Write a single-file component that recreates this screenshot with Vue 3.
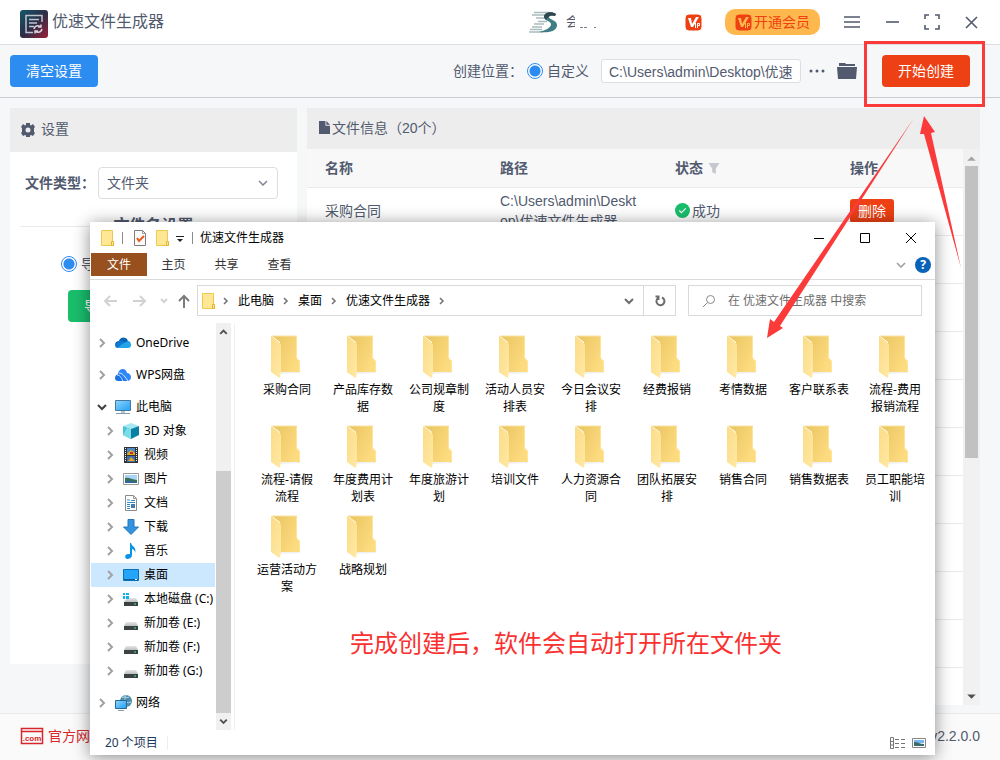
<script setup>
import { ref } from 'vue'

const location = ref('custom')
const source = ref('import')
const path = ref('C:\\Users\\admin\\Desktop\\优速')
const search = ref('')

const drives = [
  { name: '3D 对象', icon: 'cube' },
  { name: '视频', icon: 'video' },
  { name: '图片', icon: 'picture' },
  { name: '文档', icon: 'doc' },
  { name: '下载', icon: 'download' },
  { name: '音乐', icon: 'music' },
  { name: '桌面', icon: 'desktop', active: true },
  { name: '本地磁盘 (C:)', icon: 'system-disk' },
  { name: '新加卷 (E:)', icon: 'disk' },
  { name: '新加卷 (F:)', icon: 'disk' },
  { name: '新加卷 (G:)', icon: 'disk' },
]

const groups = [
  { items: [{ name: 'OneDrive', icon: 'onedrive' }] },
  { items: [{ name: 'WPS网盘', icon: 'wps' }] },
  {
    items: [
      { name: '此电脑', icon: 'pc', open: true },
      ...drives.map((d) => ({ ...d, child: true })),
    ],
  },
  { items: [{ name: '网络', icon: 'network' }] },
]

const folders = [
  '采购合同', '产品库存数据', '公司规章制度', '活动人员安排表', '今日会议安排',
  '经费报销', '考情数据', '客户联系表', '流程-费用报销流程',
  '流程-请假流程', '年度费用计划表', '年度旅游计划', '培训文件', '人力资源合同',
  '团队拓展安排', '销售合同', '销售数据表', '员工职能培训',
  '运营活动方案', '战略规划',
]

const crumbs = ['此电脑', '桌面', '优速文件生成器']
</script>

<template>
  <div class="app">
    <svg class="sprite" aria-hidden="true">
      <defs>
        <linearGradient id="gBack" x1="0" y1="0" x2="1" y2="0.6">
          <stop offset="0" stop-color="#e9c45f" /><stop offset="1" stop-color="#fddc80" />
        </linearGradient>
        <linearGradient id="gFlap" x1="0" y1="0" x2="1" y2="1">
          <stop offset="0" stop-color="#fbdc85" /><stop offset="1" stop-color="#ffe9a6" />
        </linearGradient>
        <linearGradient id="gLogo" x1="0" y1="0" x2="1" y2="1">
          <stop offset="0" stop-color="#14586a" /><stop offset="0.5" stop-color="#2c2d48" /><stop offset="1" stop-color="#9c2038" />
        </linearGradient>
        <linearGradient id="gScreen" x1="0" y1="0" x2="1" y2="1">
          <stop offset="0" stop-color="#8fd4ff" /><stop offset="1" stop-color="#22a0f5" />
        </linearGradient>
        <linearGradient id="gDisk" x1="0" y1="0" x2="0" y2="1">
          <stop offset="0" stop-color="#e4e7e9" /><stop offset="1" stop-color="#b9bec2" />
        </linearGradient>
      </defs>
      <symbol id="i-folder-large" viewBox="0 0 32 44">
        <path d="M9 37h19l2 1-21 1z" fill="#f1f1f1" />
        <path d="M1 1h25v22l3 3v11H9V7z" fill="url(#gBack)" />
        <path d="M25.500 2v21.500l3 3V36" fill="none" stroke="#ffe59a" />
        <path d="M0 1l9 7 1 2v26l-1 7-2-1-7-5z" fill="url(#gFlap)" />
        <path d="M1 1h25" stroke="#f8e3a4" />
      </symbol>
      <symbol id="i-folder" viewBox="0 0 16 18">
        <path d="M1.500 1.500h11v12h1v3h-12z" fill="#ffe795" stroke="#eec84f" />
        <path d="M11.500 12.500h2v4h-2z" fill="#ffe795" stroke="#e3b52f" />
      </symbol>
      <symbol id="i-chevron" viewBox="0 0 8 12"><path d="M2 2l4 4-4 4" fill="none" stroke="#a2a2a2" stroke-width="2" /></symbol>
      <symbol id="i-onedrive" viewBox="0 0 18 18">
        <path d="M1 11C1 8 3 7 5 7 6 3 12 2 14 7l1 2z" fill="#0a64b4" />
        <path d="M5 7c3-1 5 1 7 3l-8 4H4C2 14 1 13 1 11z" fill="#1078d2" />
        <path d="M8 10l6-3c2 0 3 2 3 4s-1 3-3 3H4z" fill="#1fa6ea" />
      </symbol>
      <symbol id="i-wps" viewBox="0 0 18 18">
        <path d="M4 9C4 2 12 1 13 7c2 0 4 2 4 4 0 2-1 4-4 4H8z" fill="#2f86f7" />
        <path d="M1 12c0-3 3-5 6-3l5 6H4c-2 0-3-1-3-3z" fill="#1a72e8" />
        <path d="M5 7c3 0 5 2 9 8M3 9c3 0 4 2 6 6" stroke="#d4e8ff" fill="none" />
      </symbol>
      <symbol id="i-pc" viewBox="0 0 18 18">
        <path d="M1.500 2.500h15v10h-15z" fill="url(#gScreen)" stroke="#42799d" />
        <path d="M7 13h4v2H7z" fill="#b7c7d1" /><path d="M2 15.500h14" stroke="#7f9bac" />
      </symbol>
      <symbol id="i-cube" viewBox="0 0 18 18">
        <path d="M1 4l8-3 8 3-8 3z" fill="#a5e8f2" /><path d="M1 4l8 3v10l-8-4z" fill="#46c3d8" /><path d="M17 4L9 7v10l8-4z" fill="#087fa3" />
        <path d="M1 13l4-7 4 1v10z" fill="#7edbe8" />
      </symbol>
      <symbol id="i-video" viewBox="0 0 18 18">
        <path d="M2 1h14v16H2z" fill="#333" /><path d="M5 2h8v7H5z" fill="#4f89c6" /><path d="M5 10h8v6H5z" fill="#3f6eb2" />
        <path d="M5 8l4-4 4 3v2H5zM6 15l3-4 4 4z" fill="#e1a821" /><path d="M8 6h3v2H8z" fill="#bd3527" />
        <path d="M3.500 2v14M14.500 2v14" stroke="#eee" stroke-dasharray="1 1" />
      </symbol>
      <symbol id="i-picture" viewBox="0 0 18 18">
        <path d="M1.500 3.500h15v11h-15z" fill="#fff" stroke="#999" /><path d="M3 5h12v8H3z" fill="#a9d4f5" />
        <path d="M3 8c4-1 7 2 12 2v3H3z" fill="#37705c" /><path d="M3 11c4 0 8 0 12 2H3z" fill="#2b65a5" />
      </symbol>
      <symbol id="i-doc" viewBox="0 0 18 18">
        <path d="M3.500 1.500h8l3 3v12h-11z" fill="#fff" stroke="#8b8b8b" /><path d="M11.500 1.500v3h3" fill="none" stroke="#999" />
        <path d="M5 6h3M9 6.500h4M5 8.500h8M5 10.500h3M5 12.500h3M5 14.500h3" stroke="#328bc5" /><path d="M9 10h4v4H9z" fill="#417bb0" />
      </symbol>
      <symbol id="i-download" viewBox="0 0 18 18"><path d="M6 1.500h6V9h4.500L9 16.500 1.500 9H6z" fill="#3393df" stroke="#2476bd" /></symbol>
      <symbol id="i-music" viewBox="0 0 18 18">
        <path d="M9 1c1 4 6 4 4 10 0-3-2-4-3-4v6c0 3-3 4-5 4-3-1-2-5 1-5h2V1z" fill="#0b93e6" />
      </symbol>
      <symbol id="i-desktop" viewBox="0 0 18 18">
        <path d="M1.500 3.500h15v11h-15z" fill="#24a5fa" stroke="#0a70b8" /><path d="M2 13.500h14" stroke="#0c5c96" /><path d="M13 13.500h2" stroke="#fff" />
      </symbol>
      <symbol id="i-disk" viewBox="0 0 18 18">
        <path d="M4 8h10l2 4H2z" fill="url(#gDisk)" /><path d="M2 12h14v4H2z" fill="#3c4144" /><path d="M12 14h2" stroke="#3df06c" stroke-width="1" />
      </symbol>
      <symbol id="i-system-disk" viewBox="0 0 18 18">
        <path d="M5 8h9l2 4H2z" fill="url(#gDisk)" /><path d="M2 12h14v4H2z" fill="#3c4144" /><path d="M12 14h2" stroke="#3df06c" stroke-width="1" />
        <path d="M1 3h2v2H1zM4 3h3v2H4zM1 6h2v3H1zM4 6h3v3H4z" fill="#11b2ef" />
      </symbol>
      <symbol id="i-network" viewBox="0 0 18 18">
        <circle cx="12" cy="7" r="6" fill="#4b8bab" /><path d="M8 4c3-3 4 1 7-1M9 8c3-1 4 2 8 0M12 1c-2 4-1 8 1 11" stroke="#bbdcea" fill="none" />
        <path d="M1.500 6.500h11v8h-11z" fill="url(#gScreen)" stroke="#29688f" /><path d="M4 16.500h6" stroke="#8aa2b0" />
      </symbol>
      <symbol id="i-vip" viewBox="0 0 17 17">
        <rect width="17" height="17" rx="4" fill="#ee4012" />
        <path class="vip-v" d="M3 4h3l1 6 4-7h3L8 13H6z" />
        <path class="vip-p" d="M10.500 9v5M12.500 14V9.500h2v2h-2" />
      </symbol>
    </svg>

    <header class="titlebar">
      <svg class="logo" viewBox="0 0 28 28">
        <rect width="28" height="28" rx="3" fill="url(#gLogo)" />
        <path d="M22 12V5.500H6v17h7M9 9.500h10M9 13h8M9 16.500h5" fill="none" stroke="#bcc4cf" stroke-width="1.500" />
        <path d="M14 19c1-4 5-4 7-2M21 14.500V17h-3M22 19c-1 4-5 4-7 2M15 23.500V21h3" fill="none" stroke="#d7d2da" stroke-width="1.500" />
      </svg>
      <h1 class="app-name">优速文件生成器</h1>
      <div class="account">
        <svg class="avatar" viewBox="0 0 30 24">
          <path d="M6 2.500h15M4 5h13M8 8h10M10 11.500h9M6 14h10M4 17h10M2 19.500h12M1 22h14" stroke="#a9bcbe" stroke-width="1.500" />
          <path d="M28 4C24 1 16 2 16 7c0 4 8 4 7 8-1 3-5 5-12 7 8 1 17 0 18-6 1-6-8-6-8-9 0-2 4-2 6-1z" fill="#417e83" />
          <path d="M28 4C24 1 16 2 16 7l2 3c2-2 2-5 9-4z" fill="#2f474d" />
        </svg>
        <span class="user">会</span>
        <svg class="smudge" viewBox="0 0 20 4"><path d="M1 2.500h3M5 2.500h3M15 2.500h2" stroke="#777f91" /></svg>
      </div>
      <svg class="vip"><use href="#i-vip" /></svg>
      <button class="vip-btn"><svg class="vip"><use href="#i-vip" /></svg>开通会员</button>
      <button class="win-btn menu" aria-label="菜单"><svg viewBox="0 0 18 18"><path d="M1 4h16M1 9h16M1 14h16" /></svg></button>
      <button class="win-btn" aria-label="最小化"><svg viewBox="0 0 18 18"><path d="M3 9h13" /></svg></button>
      <button class="win-btn" aria-label="最大化"><svg viewBox="0 0 18 18"><path d="M2 6V2h4M12 2h4v4M16 12v4h-4M6 16H2v-4" /></svg></button>
      <button class="win-btn" aria-label="关闭"><svg viewBox="0 0 18 18"><path d="M3 4l11 11M14 4L3 15" /></svg></button>
    </header>

    <div class="toolbar">
      <button class="btn blue">清空设置</button>
      <span class="loc-label">创建位置：</span>
      <label class="radio"><input v-model="location" type="radio" name="location" value="custom">自定义</label>
      <input v-model="path" class="path" type="text" aria-label="创建位置">
      <button class="plain dots" aria-label="更多"><svg viewBox="0 0 16 6"><circle cx="2" cy="3" r="1.500" /><circle cx="8" cy="3" r="1.500" /><circle cx="14" cy="3" r="1.500" /></svg></button>
      <button class="plain open" aria-label="打开文件夹"><svg viewBox="0 0 20 18"><path d="M2 4V1h6l1 1h9v2z" /><path d="M0 5h20l-1 12H1z" /></svg></button>
      <div class="create">
        <button class="btn red">开始创建</button>
        <span class="highlight"></span>
      </div>
    </div>

    <main class="main">
      <section class="settings">
        <h2 class="panel-head">
          <svg class="gear" viewBox="0 0 16 16"><path fill-rule="evenodd" d="M6 1h4v2l1 .5L13 2l2 3-1 1v4l1 1-2 3-2-1-1 .5V15H6v-1.500L5 13l-2 1-2-3 1-1V6L1 5l2-3 2 1.500L6 3zM8 5.500a2.500 2.500 0 1 0 0 5 2.500 2.500 0 0 0 0-5z" /></svg>
          设置
        </h2>
        <div class="field">
          <label for="type">文件类型：</label>
          <div class="select">
            <select id="type"><option>文件夹</option></select>
            <svg viewBox="0 0 10 6"><path d="M1 1l4 4 4-4" /></svg>
          </div>
        </div>
        <div class="divider"><span>文件名设置</span></div>
        <label class="radio mode"><input v-model="source" type="radio" name="source" value="import">导入</label>
        <button class="btn green">导入</button>
      </section>

      <section class="files">
        <h2 class="panel-head slim">
          <svg class="page" viewBox="0 0 12 14"><path d="M0 0h7v5h5v9H0z" /><path d="M8 0l4 4H8z" /></svg>文件信息（20个）
        </h2>
        <div class="table-area">
          <div class="table-wrap">
            <table>
              <thead>
                <tr>
                  <th>名称</th><th>路径</th>
                  <th>状态<svg class="filter" viewBox="0 0 12 12"><path d="M0 0h12L8 6v6l-4-2V6z" /></svg></th>
                  <th>操作</th>
                </tr>
              </thead>
              <tbody>
                <tr>
                  <td>采购合同</td>
                  <td class="wrap">C:\Users\admin\Desktop\优速文件生成器</td>
                  <td><span class="ok"><svg viewBox="0 0 14 14"><circle cx="7" cy="7" r="7" /><path d="M4 7l2 2 4-4" /></svg>成功</span></td>
                  <td><button class="del">删除</button></td>
                </tr>
                <tr v-for="n in 11" :key="n"><td></td><td></td><td></td><td></td></tr>
              </tbody>
            </table>
          </div>
          <div class="scroll">
            <svg viewBox="0 0 16 16"><path d="M4 11l4-4 4 4z" fill="#a3a3a3" /></svg>
            <div class="track"><div class="thumb"></div></div>
            <svg viewBox="0 0 16 16"><path d="M4 6l4 4 4-4z" fill="#505050" /></svg>
          </div>
        </div>
      </section>
    </main>

    <footer class="footer">
      <a class="site" href="#">
        <svg viewBox="0 0 24 18"><path d="M1.500 1.500h21v15h-21zM1.500 4.500h21" fill="none" stroke="#d8262c" stroke-width="1.500" /><text x="12" y="14" text-anchor="middle">.com</text></svg>官方网站
      </a>
      <span>v2.2.0.0</span>
    </footer>

    <section class="explorer" aria-label="文件资源管理器">
      <div class="ex-title">
        <svg class="f"><use href="#i-folder" /></svg>
        <i class="bar"></i>
        <svg class="f check" viewBox="0 0 16 18"><path d="M2.500 1.500h8l3 3v12h-11z" fill="#fafafa" stroke="#7d7d7d" /><path d="M10.500 1.500v3h3" fill="none" stroke="#999" /><path d="M5 9l2 3 5-5" fill="none" stroke="#e9591c" stroke-width="2" /></svg>
        <svg class="f"><use href="#i-folder" /></svg>
        <svg class="drop" viewBox="0 0 8 8"><path d="M0 1.500h8" stroke="#222" /><path d="M1 4h6L4 7z" fill="#222" /></svg>
        <i class="bar"></i>
        <span class="ex-name">优速文件生成器</span>
        <button class="ex-btn" aria-label="最小化"><svg viewBox="0 0 12 12"><path d="M1 6.500h10" /></svg></button>
        <button class="ex-btn" aria-label="最大化"><svg viewBox="0 0 12 12"><path d="M1.500 1.500h9v9h-9z" /></svg></button>
        <button class="ex-btn" aria-label="关闭"><svg viewBox="0 0 12 12"><path d="M1 1l10 10M11 1L1 11" /></svg></button>
      </div>
      <div class="tabs">
        <button class="active">文件</button><button>主页</button><button>共享</button><button>查看</button>
        <svg class="fold" viewBox="0 0 10 6"><path d="M1 1l4 4 4-4" /></svg>
        <button class="help" aria-label="帮助">?</button>
      </div>
      <div class="address">
        <svg class="nav-i" viewBox="0 0 14 12"><path d="M7 1L2 6l5 5M2 6h12" stroke="#d2d2d2" /></svg>
        <svg class="nav-i" viewBox="0 0 14 12"><path d="M7 1l5 5-5 5M12 6H0" stroke="#d2d2d2" /></svg>
        <svg class="nav-s" viewBox="0 0 8 6"><path d="M1 1l3 3 3-3" stroke="#d2d2d2" /></svg>
        <svg class="nav-i up" viewBox="0 0 14 14"><path d="M2 7l5-5 5 5M7 2v12" stroke="#7c7c7c" /></svg>
        <div class="crumbs">
          <svg class="f"><use href="#i-folder" /></svg>
          <svg class="sep" viewBox="0 0 6 8"><path d="M1 1l3 3-3 3" /></svg>
          <template v-for="c in crumbs" :key="c">
            <a href="#">{{ c }}</a>
            <svg class="sep" viewBox="0 0 6 8"><path d="M1 1l3 3-3 3" /></svg>
          </template>
          <svg class="pick" viewBox="0 0 10 8"><path d="M1 2l4 4 4-4" /></svg>
          <button class="refresh" aria-label="刷新"><svg viewBox="0 0 12 12"><path d="M8 2.500a4 4 0 1 1-4 .5M1.500 1.500h3V5" /></svg></button>
        </div>
        <div class="search">
          <svg viewBox="0 0 14 14"><circle cx="8.500" cy="5.500" r="4" /><path d="M5.500 8.500L1 13" /></svg>
          <input v-model="search" type="search" aria-label="搜索" placeholder="在 优速文件生成器 中搜索">
        </div>
      </div>
      <div class="ex-body">
        <nav class="tree">
          <ul v-for="(g, i) in groups" :key="i">
            <li v-for="item in g.items" :key="item.name">
              <a href="#" :class="{ child: item.child, active: item.active }">
                <svg v-if="item.open" class="arrow wide" viewBox="0 0 10 12"><path d="M1 4l4 4 4-4" fill="none" stroke="#404040" stroke-width="2" /></svg>
                <svg v-else class="arrow"><use href="#i-chevron" /></svg>
                <svg class="ico"><use :href="'#i-' + item.icon" /></svg>
                <span>{{ item.name }}</span>
              </a>
            </li>
          </ul>
        </nav>
        <div class="ex-scroll">
          <svg viewBox="0 0 16 16"><path d="M4.500 10.500L8 7l3.500 3.500" /></svg>
          <div class="track"><div class="thumb"></div></div>
          <svg viewBox="0 0 16 16"><path d="M4.500 6L8 9.500 11.500 6" /></svg>
        </div>
        <div class="content">
          <ul class="grid">
            <li v-for="f in folders" :key="f">
              <svg><use href="#i-folder-large" /></svg>
              <span>{{ f }}</span>
            </li>
          </ul>
          <p class="note">完成创建后，软件会自动打开所在文件夹</p>
        </div>
      </div>
      <div class="status">
        <span>20 个项目</span>
        <svg class="details" viewBox="0 0 18 14"><path d="M1.500 1.500h3v11h-3zM1.500 5.500h3M1.500 9h3M6 3.500h4M12 3.500h4M6 7.500h4M12 7.500h4M6 11.500h4M12 11.500h4" /></svg>
        <svg class="large" viewBox="0 0 14 12"><path d="M.5 1.500h13v9H.5z" fill="#fff" stroke="#858585" /><path d="M2 3h10v3H2z" fill="#74b5f6" /><path d="M2 5c4 0 6 2 10 2v2H2z" fill="#3c6c69" /></svg>
      </div>
    </section>

    <svg class="arrows" viewBox="0 0 240 240" aria-hidden="true">
      <path d="M154 12L14 216l-4-3-3 19 16-10-3-2z" />
      <path d="M164 10l-4 18h4l37 134-30-135 4-1z" />
    </svg>
  </div>
</template>

<style>
body { background: #f5f7f9; }
</style>

<style scoped>
* { box-sizing: border-box; }
.app {
  position: relative;
  display: flex;
  flex-direction: column;
  height: 100vh;
  overflow: hidden;
  color: #515a6e;
  background: #f5f7f9;
  font: 14px/20px "Liberation Sans", "Noto Sans CJK SC", sans-serif;
}
.sprite { position: absolute; width: 0; height: 0; }
button, input, select { font: inherit; color: inherit; }
button { padding: 0; border: 0; background: none; white-space: nowrap; }
ul { margin: 0; padding: 0; list-style: none; }
a { color: inherit; text-decoration: none; }
svg { flex: none; }

.titlebar {
  display: flex;
  align-items: center;
  height: 45px;
  flex: none;
  padding: 0 19px 0 20px;
  background: #fff;
  border-bottom: 1px solid #dcdee2;
}
.logo { width: 28px; height: 28px; margin: 4px 4px 0 0; }
.app-name { margin: 0 auto 0 0; font-size: 16px; font-weight: 400; }
.account { display: flex; align-items: center; width: 157px; }
.avatar { width: 30px; height: 24px; }
.user { position: relative; margin-left: 8px; font-size: 13px; }
.user::after { content: ""; position: absolute; inset: 0 0 0 9px; background: #fff; }
.smudge { width: 20px; height: 4px; margin-top: 10px; }
.vip { width: 17px; height: 17px; fill: #fff; stroke: #fff; }
.vip-v { stroke: none; }
.vip-p { fill: none; }
.vip-btn {
  display: flex;
  align-items: center;
  gap: 2px;
  height: 26px;
  margin: 0 16px 0 23px;
  padding: 0 10px;
  border-radius: 10px;
  color: #ee4012;
  background: #ffb84d;
}
.vip-btn .vip { fill: #ffb84d; stroke: #ffb84d; }
.win-btn { display: flex; margin-left: 22px; }
.win-btn.menu { margin-left: 7px; }
.win-btn svg { width: 18px; height: 18px; fill: none; stroke: #515a6e; stroke-width: 1.6; }

.toolbar {
  display: flex;
  align-items: center;
  height: 53px;
  flex: none;
  padding: 0 30px 0 10px;
  border-bottom: 1px solid #c9ccd2;
}
.btn { height: 32px; padding: 0 16px; border-radius: 4px; color: #fff; }
.blue { background: #2d8cf0; }
.red { background: #ed4014; }
.green { background: #19be6b; }
.loc-label { margin-left: auto; }
.radio { display: flex; align-items: center; gap: 4px; }
.radio input {
  appearance: none;
  width: 16px;
  height: 16px;
  margin: 0 0 0 4px;
  border: 1px solid #2d8cf0;
  border-radius: 50%;
  background: radial-gradient(circle, #2d8cf0 5px, #fff 6px);
}
.path {
  width: 200px;
  height: 24px;
  margin: 0 8px 0 12px;
  padding: 0 7px;
  border: 1px solid #dcdee2;
  border-radius: 3px;
  background: #fff;
}
.plain { display: flex; }
.plain svg { fill: #515a6e; }
.dots svg { width: 16px; height: 6px; }
.open { margin-left: 12px; }
.open svg { width: 20px; height: 18px; }
.create { position: relative; margin-left: 25px; }
.highlight { position: absolute; inset: -14px -15px -20px -18px; border: 3px solid #fb3a3a; }

.main { display: flex; flex: 1; gap: 10px; min-height: 0; padding: 10px 20px 8px 10px; }
.settings { flex: 0 1 287px; margin-bottom: 41px; background: #fff; }
.files { display: flex; flex-direction: column; flex: 1; min-width: 0; background: #fff; }
.panel-head {
  display: flex;
  align-items: center;
  gap: 5px;
  height: 44px;
  margin: 0;
  padding: 0 10px 2px;
  font-size: 14px;
  font-weight: 400;
  background: #ededed;
}
.gear { width: 16px; height: 16px; margin-top: 2px; fill: #515a6e; }
.slim { gap: 2px; height: 41px; padding: 0 12px 2px; flex: none; }
.page { width: 11px; height: 13px; fill: #515a6e; }
.field { display: flex; align-items: center; padding: 15px 19px 0 15px; font-weight: 700; }
.select { position: relative; flex: 1; margin-left: 3px; font-weight: 400; }
.select select {
  appearance: none;
  width: 100%;
  height: 32px;
  padding: 0 8px;
  border: 1px solid #dcdee2;
  border-radius: 4px;
  background: #fff;
}
.select svg { position: absolute; right: 10px; top: 13px; width: 10px; height: 6px; fill: none; stroke: #808695; stroke-width: 1.5; }
.divider { display: flex; align-items: center; gap: 16px; margin: 15px 10px 0; font-size: 16px; font-weight: 700; line-height: 24px; }
.divider::before, .divider::after { content: ""; flex: 1; height: 1px; background: #e8eaec; }
.mode { margin: 16px 0 0 47px; }
.settings .green { margin: 16px 0 0 58px; }

.table-area { display: flex; flex: 1; min-height: 0; }
.table-wrap { flex: 1; overflow: hidden; }
table { width: 100%; border-collapse: separate; border-spacing: 0; table-layout: fixed; text-align: left; }
th { width: 175px; height: 39px; padding: 0 18px; background: #f8f8f9; border-bottom: 1px solid #e8eaec; }
th:last-child { width: auto; }
td { height: 48px; padding: 0 18px 2px; border-bottom: 1px solid #e8eaec; }
td.wrap { word-break: break-all; }
.filter { width: 12px; height: 11px; margin-left: 5px; fill: #c5c8ce; vertical-align: -1px; }
.ok { display: flex; align-items: center; gap: 2px; }
.ok svg { width: 15px; height: 15px; fill: #19be6b; }
.ok path { fill: none; stroke: #fff; }
.del { height: 24px; padding: 0 8px; border-radius: 3px; color: #fff; background: #ed4014; }
.scroll { display: flex; flex-direction: column; width: 17px; background: #f1f1f1; }
.scroll svg { width: 17px; height: 17px; }
.track { display: flex; flex-direction: column; flex: 1; }
.scroll .thumb { height: 56%; margin: 0 2px; background: #c1c1c1; }

.footer {
  display: flex;
  align-items: center;
  justify-content: space-between;
  height: 47px;
  flex: none;
  padding: 0 20px 2px;
  border-top: 1px solid #e8eaec;
  background: #fafafa;
}
.site { display: flex; align-items: center; gap: 4px; color: #d8262c; }
.site svg { width: 24px; height: 18px; }
.site text { font-size: 8px; font-weight: 700; fill: #d8262c; }

.explorer {
  position: absolute;
  inset: 222px 65px 5px 90px;
  display: flex;
  flex-direction: column;
  color: #000;
  background: #fff;
  box-shadow: 0 2px 16px rgba(0, 0, 0, 0.45);
  font: 12px/17px "Noto Sans", "Noto Sans CJK SC", sans-serif;
}
.f { width: 16px; height: 18px; }
.ex-title { display: flex; align-items: center; height: 31px; padding: 0 18px 0 10px; flex: none; }
.ex-title .bar { width: 1px; height: 12px; margin: 0 9px 0 6px; background: #8c8c8c; }
.ex-title .check { margin-right: 7px; }
.ex-title .drop { width: 8px; height: 8px; margin: 2px 2px 0 5px; }
.ex-title .drop + .bar { margin-right: 7px; }
.ex-name { margin-right: auto; }
.ex-btn { display: flex; margin-left: 34px; }
.ex-btn svg { width: 12px; height: 12px; fill: none; stroke: #000; }
.tabs { display: flex; align-items: center; height: 27px; flex: none; padding: 0 4px 3px 1px; border-bottom: 1px solid #dadbdc; }
.tabs button { width: 53px; height: 23px; color: #333; }
.tabs .active { width: 56px; color: #fff; background: #99501f; }
.fold { width: 10px; height: 6px; margin: 0 9px 0 auto; fill: none; stroke: #9c9c9c; stroke-width: 1.5; }
.tabs .help { width: 16px; height: 16px; border-radius: 50%; color: #fff; background: #0a63b8; font-weight: 700; line-height: 16px; }
.address { display: flex; align-items: center; height: 41px; flex: none; padding: 0 13px; }
.address svg { fill: none; stroke-width: 2; }
.address .f { stroke-width: 1; margin-left: 3px; }
.nav-i { width: 14px; height: 12px; margin-right: 16px; }
.nav-i.up { height: 14px; margin-right: 6px; }
.nav-s { width: 8px; height: 6px; margin: 0 9px 0 -3px; }
.crumbs { display: flex; align-items: center; flex: 1; height: 31px; border: 1px solid #d9d9d9; }
.crumbs a { margin: 0 9px; }
.sep { width: 6px; height: 8px; stroke: #707070; }
.crumbs .sep { stroke-width: 1.5; }
.f + .sep { margin-left: 6px; }
.pick { width: 10px; height: 8px; margin: 0 9px 0 auto; stroke: #6c6c6c; }
.refresh { display: flex; align-items: center; justify-content: center; width: 32px; height: 29px; border-left: 1px solid #d9d9d9; }
.refresh svg { width: 12px; height: 12px; stroke: #6c6c6c; }
.search { display: flex; align-items: center; gap: 12px; width: 234px; height: 31px; margin-left: 12px; padding: 0 13px; border: 1px solid #d9d9d9; }
.search svg { width: 14px; height: 14px; stroke: #8a8a8a; stroke-width: 1; }
.search input { flex: 1; min-width: 0; padding: 0; border: 0; outline: 0; background: none; }
.search input::placeholder { color: #6d6d6d; opacity: 1; }

.ex-body { display: flex; flex: 1; min-height: 0; margin-top: 2px; }
.tree { width: 125px; padding: 8px 0 0 1px; overflow: hidden; flex: none; }
.tree ul { margin-bottom: 8px; }
.tree a { display: flex; align-items: center; height: 24px; padding-left: 7px; white-space: nowrap; }
.tree a.child { padding-left: 15px; }
.tree a.active { background: #cce8ff; }
.tree span { padding-bottom: 2px; }
.arrow { width: 8px; height: 12px; margin-right: 8px; }
.arrow.wide { width: 10px; margin: 0 7px 0 -1px; }
.ico { width: 18px; height: 18px; margin-right: 4px; }
.ex-scroll { display: flex; flex-direction: column; width: 17px; padding: 0 1px; background: linear-gradient(#f0f0f0, #f0f0f0) 1px 0 / 15px 100% no-repeat; }
.ex-scroll svg { width: 15px; height: 17px; fill: none; stroke: #505050; stroke-width: 2; }
.ex-scroll .thumb { height: 65%; margin-top: auto; background: #cdcdcd; }
.content { flex: 1; min-width: 0; margin-left: 2px; padding: 12px 0 0 14px; border-left: 1px solid #f0f0f0; }
.grid { display: grid; grid-template-columns: repeat(auto-fill, 76px); grid-auto-rows: 90px; }
.grid li { display: flex; flex-direction: column; align-items: center; }
.grid svg { width: 32px; height: 44px; }
.grid span { width: 62px; margin-top: 2px; text-align: center; }
.note { margin: 20px 0 0 101px; color: #fb3030; font-size: 24px; line-height: 36px; }
.status { display: flex; align-items: center; height: 25px; flex: none; padding: 0 9px 0 15px; color: #1e395b; }
.status span { margin-right: auto; padding-right: 9px; border-right: 1px solid #eee; line-height: 14px; }
.details { width: 18px; height: 14px; margin-right: 5px; fill: none; stroke: #777; }
.large { width: 14px; height: 12px; }

.arrows { position: absolute; top: 106px; right: 0; width: 240px; height: 240px; fill: #fb3a3a; pointer-events: none; }
</style>
